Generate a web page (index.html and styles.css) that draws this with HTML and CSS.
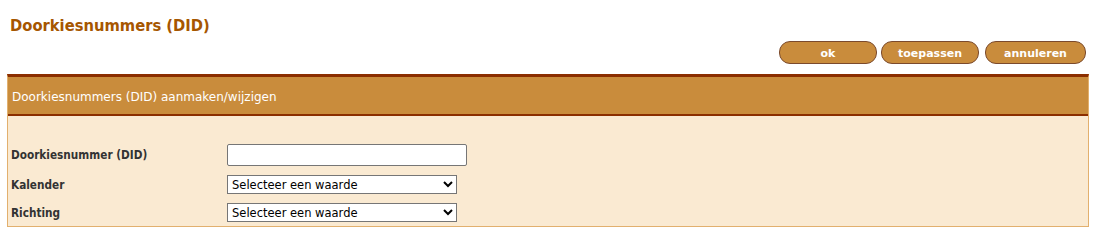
FILE: index.html
```html
<!DOCTYPE html>
<html>
<head>
<meta charset="utf-8">
<link rel="stylesheet" href="styles.css">
</head>
<body>
<div class="page">
  <h1 class="title">Doorkiesnummers (DID)</h1>
  <div class="toolbar">
    <button class="btn btn-ok">ok</button>
    <button class="btn btn-apply">toepassen</button>
    <button class="btn btn-cancel">annuleren</button>
  </div>
  <div class="panel">
    <div class="panel-head">Doorkiesnummers (DID) aanmaken/wijzigen</div>
    <div class="panel-body">
      <div class="row row-input">
        <label class="label">Doorkiesnummer (DID)</label>
        <input class="text" type="text">
      </div>
      <div class="row">
        <label class="label">Kalender</label>
        <select class="select"><option>Selecteer een waarde</option></select>
      </div>
      <div class="row">
        <label class="label">Richting</label>
        <select class="select"><option>Selecteer een waarde</option></select>
      </div>
    </div>
  </div>
</div>
</body>
</html>
```
FILE: styles.css
```css
html, body { margin: 0; padding: 0; background: #fff; }
.page { padding: 0 9px 0 7px; font-family: "DejaVu Sans", Verdana, sans-serif; }
.title {
  margin: 0;
  padding: 16px 0 0 3px;
  height: 25px;
  font-family: "DejaVu Sans Condensed", "DejaVu Sans", sans-serif;
  font-size: 16.4px;
  font-weight: bold;
  color: #a65600;
  line-height: 20px;
}
.toolbar {
  display: flex;
  justify-content: flex-end;
  gap: 4px;
  padding-right: 3px;
  height: 33px;
}
.btn {
  width: 98px;
  height: 23px;
  border: 1px solid #7b4a2c;
  border-radius: 11px;
  background: #c98c3c;
  color: #fff;
  font-family: "DejaVu Sans", Verdana, sans-serif;
  font-weight: bold;
  font-size: 11px;
  padding: 1px 0 0;
}
.btn-cancel { width: 101px; margin-left: 2px; }
.panel {
  border-top: 3px solid #8b2e00;
  border-left: 1px solid #e2b06e;
  border-right: 1px solid #e2b06e;
  border-bottom: 1px solid #e2b06e;
}
.panel-head {
  background: #c98c3c;
  color: #fff;
  font-size: 12px;
  height: 33px;
  line-height: 33px;
  padding: 4px 0 0 4px;
  border-bottom: 2px solid #8b2e00;
}
.panel-body {
  background: #faead2;
  padding: 28px 0 4px 3px;
  display: flex;
  flex-direction: column;
  gap: 9px;
}
.row { display: flex; align-items: center; }
.label {
  width: 216px;
  font-family: "DejaVu Sans Condensed", "DejaVu Sans", sans-serif;
  font-size: 11.7px;
  font-weight: bold;
  color: #333;
}
.text {
  width: 240px;
  height: 22px;
  box-sizing: border-box;
  border: 1px solid #767676;
  border-radius: 2px;
  background: #fff;
  margin: 0;
}
.select {
  width: 230px;
  height: 19px;
  box-sizing: border-box;
  border: 1px solid #767676;
  border-radius: 0;
  background: #fff;
  font-family: "DejaVu Sans", Verdana, sans-serif;
  font-size: 11.5px;
  margin: 0;
  color: #000;
}
```
